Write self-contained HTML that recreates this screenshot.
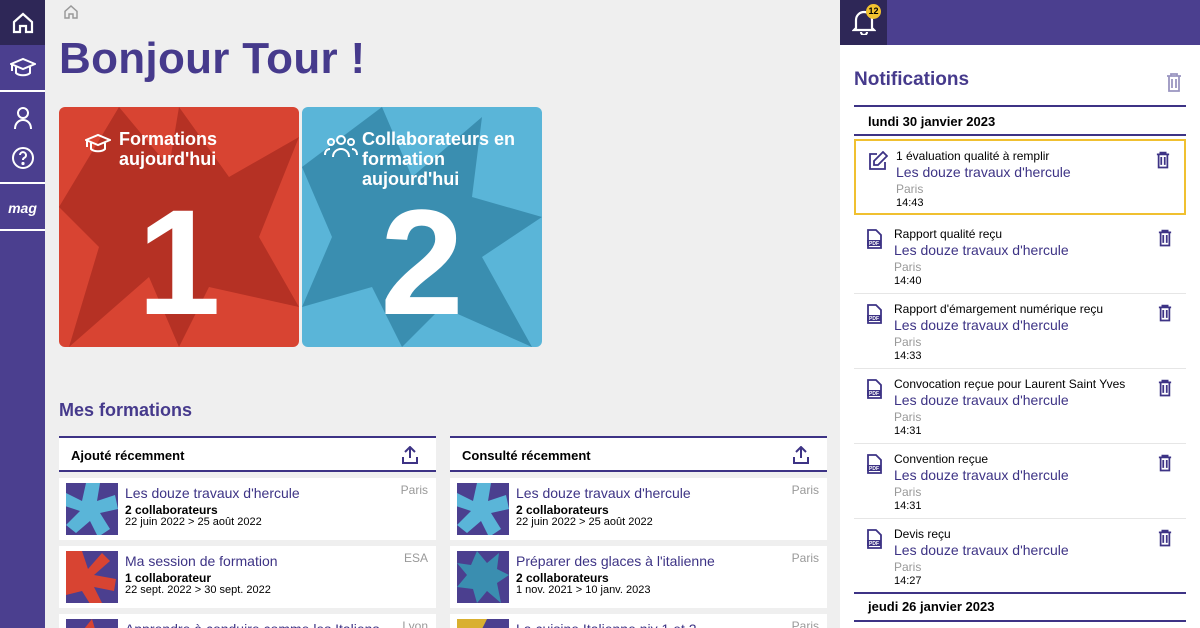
<!DOCTYPE html>
<html style="width:1200px;height:628px;overflow:hidden"><head><meta charset="utf-8"><style>
*{margin:0;padding:0;box-sizing:border-box}
body{width:1200px;height:628px;overflow:hidden;background:#efefef;font-family:"Liberation Sans",sans-serif;position:relative}
.abs{position:absolute}
.side{left:0;top:0;width:45px;height:628px;background:#4b3f8f}
.sb{position:absolute;left:0;width:45px;display:flex;align-items:center;justify-content:center;border-bottom:2px solid #fff}
.card{position:absolute;top:107px;width:240px;height:240px;border-radius:6px;overflow:hidden}
.ct{position:absolute;color:#fff;font-size:18px;font-weight:bold;line-height:20px}
.big{position:absolute;color:#fff;font-weight:bold;font-size:150px;line-height:150px;width:100%;text-align:center;top:80px}
.list{position:absolute;top:436px;width:377px;height:192px;overflow:hidden}
.lh{height:36px;border-top:2px solid #3d3385;border-bottom:2px solid #3d3385;background:#fff;font-size:13px;font-weight:bold;padding:10px 12px;position:relative}
.it{background:#fff;height:62px;margin-top:6px;position:relative}
.th{position:absolute;left:7px;top:5px;width:52px;height:52px;background:#4b3f8f;overflow:hidden}
.t1{position:absolute;left:66px;top:7px;color:#3d3385;font-size:14px}
.t2{position:absolute;left:66px;top:25px;font-size:12px;font-weight:bold}
.t3{position:absolute;left:66px;top:38px;font-size:11px}
.pl{position:absolute;right:8px;top:5px;color:#999;font-size:12px}
.panel{left:840px;top:45px;width:360px;height:583px;background:#fff}
.n{position:absolute;left:854px;width:332px;height:75px;border-bottom:1px solid #e6e6e6}
.n .a{position:absolute;left:40px;top:8px;font-size:12px}
.n .b{position:absolute;left:40px;top:23px;font-size:14px;color:#3d3385}
.n .c{position:absolute;left:40px;top:41px;font-size:12px;color:#999}
.n .d{position:absolute;left:40px;top:56px;font-size:11px}
.n svg.i{position:absolute;left:12px;top:10px}
.n svg.t{position:absolute;right:14px;top:10px}
</style></head><body>
<div class="abs side"></div>
<div class="sb" style="top:0;height:45px;background:#2e2757;border:none">
<svg width="24" height="24" viewBox="0 0 24 24" fill="none" stroke="#fff" stroke-width="2.2"><path d="M3 11L12 3l9 8v10h-6v-6h-6v6H3z"/></svg></div>
<div class="sb" style="top:45px;height:47px">
<svg width="26" height="22" viewBox="0 0 26 22" fill="none" stroke="#fff" stroke-width="2"><path d="M1 7l12-5 12 5-12 5z"/><path d="M6 10v6c3 3 11 3 14 0v-6"/><path d="M2 8v6"/></svg></div>
<div class="sb" style="top:94px;height:90px;flex-direction:column;gap:16px">
<svg width="20" height="24" viewBox="0 0 20 24" fill="none" stroke="#fff" stroke-width="2"><circle cx="10" cy="7" r="5"/><path d="M2 23c0-6 4-9 8-9s8 3 8 9"/></svg>
<svg width="24" height="24" viewBox="0 0 24 24" fill="none" stroke="#fff" stroke-width="2"><circle cx="12" cy="12" r="10"/><path d="M9 9a3 3 0 1 1 4 3c-1 .5-1 1-1 2"/><circle cx="12" cy="17.5" r=".6" fill="#fff"/></svg></div>
<div class="sb" style="top:186px;height:45px;color:#fff;font-weight:bold;font-style:italic;font-size:14px">mag</div>

<svg class="abs" style="left:63px;top:4px" width="16" height="16" viewBox="0 0 24 24" fill="none" stroke="#999" stroke-width="2.2"><path d="M3 11L12 3l9 8v10h-6v-6h-6v6H3z"/></svg>
<div class="abs" style="left:59px;top:34px;color:#463a8c;font-size:44px;font-weight:bold;letter-spacing:0.3px">Bonjour Tour !</div>

<div class="card" style="left:59px;background:#d84432">
<svg width="240" height="240" class="abs"><polygon points="0,100 60,0 110,60 120,0 170,70 240,30 200,130 240,200 150,180 120,240 90,170 10,240 40,140" fill="#b53124"/></svg>
<svg class="abs" style="left:26px;top:26px" width="26" height="22" viewBox="0 0 26 22" fill="none" stroke="#fff" stroke-width="2"><path d="M1 7l12-5 12 5-12 5z"/><path d="M6 10v6c3 3 11 3 14 0v-6"/><path d="M2 8v6"/></svg>
<div class="ct" style="left:60px;top:22px">Formations<br>aujourd'hui</div>
<div class="big">1</div></div>
<div class="card" style="left:302px;background:#5ab5d8">
<svg width="240" height="240" class="abs"><polygon points="0,60 40,30 80,0 110,70 180,10 170,90 240,110 180,150 230,240 140,200 100,240 70,180 0,200 30,130" fill="#3a8eb0"/></svg>
<svg class="abs" style="left:22px;top:26px" width="34" height="26" viewBox="0 0 34 26" fill="none" stroke="#fff" stroke-width="2"><circle cx="17" cy="7" r="4"/><circle cx="7" cy="9" r="3"/><circle cx="27" cy="9" r="3"/><path d="M9 24c0-5 4-8 8-8s8 3 8 8M1 22c0-4 2-6 5-6M33 22c0-4-2-6-5-6"/></svg>
<div class="ct" style="left:60px;top:22px">Collaborateurs en<br>formation<br>aujourd'hui</div>
<div class="big">2</div></div>

<div class="abs" style="left:59px;top:400px;color:#463a8c;font-size:18px;font-weight:bold">Mes formations</div>

<div class="list" style="left:59px">
<div class="lh">Ajouté récemment<svg style="position:absolute;right:18px;top:8px" width="16" height="18" viewBox="0 0 16 18" fill="none" stroke="#3d3385" stroke-width="2"><path d="M8 12V2M3 6l5-5 5 5M1 11v6h14v-6"/></svg></div>
<div class="it"><div class="th"><svg width="52" height="52"><path d="M20 0h14l-3 18 18-6 3 14-18 4 10 16-12 8-8-16-14 12-10-8 14-14-18-6 4-12 16 8z" fill="#5ab5d8"/></svg></div><div class="t1">Les douze travaux d'hercule</div><div class="t2">2 collaborateurs</div><div class="t3">22 juin 2022 &gt; 25 août 2022</div><div class="pl">Paris</div></div>
<div class="it"><div class="th"><svg width="52" height="52"><path d="M0 0h16l6 18 14-16 8 8-16 14 22 4-2 12-20-4 8 16-10 4-10-16L0 44z" fill="#d84432"/></svg></div><div class="t1">Ma session de formation</div><div class="t2">1 collaborateur</div><div class="t3">22 sept. 2022 &gt; 30 sept. 2022</div><div class="pl">ESA</div></div>
<div class="it"><div class="th"><svg width="52" height="52"><path d="M26 0l6 20H10z" fill="#d84432"/></svg></div><div class="t1">Apprendre à conduire comme les Italiens</div><div class="pl">Lyon</div></div>
</div>
<div class="list" style="left:450px">
<div class="lh">Consulté récemment<svg style="position:absolute;right:18px;top:8px" width="16" height="18" viewBox="0 0 16 18" fill="none" stroke="#3d3385" stroke-width="2"><path d="M8 12V2M3 6l5-5 5 5M1 11v6h14v-6"/></svg></div>
<div class="it"><div class="th"><svg width="52" height="52"><path d="M20 0h14l-3 18 18-6 3 14-18 4 10 16-12 8-8-16-14 12-10-8 14-14-18-6 4-12 16 8z" fill="#5ab5d8"/></svg></div><div class="t1">Les douze travaux d'hercule</div><div class="t2">2 collaborateurs</div><div class="t3">22 juin 2022 &gt; 25 août 2022</div><div class="pl">Paris</div></div>
<div class="it"><div class="th"><svg width="52" height="52"><polygon points="20,0 30,12 42,2 40,18 52,24 40,32 44,52 30,40 20,52 16,38 0,36 10,24 0,12 14,14" fill="#3a8eb0"/></svg></div><div class="t1">Préparer des glaces à l'italienne</div><div class="t2">2 collaborateurs</div><div class="t3">1 nov. 2021 &gt; 10 janv. 2023</div><div class="pl">Paris</div></div>
<div class="it"><div class="th"><svg width="52" height="52"><polygon points="0,0 30,0 20,20 0,20" fill="#d9b030"/></svg></div><div class="t1">La cuisine Italienne niv 1 et 2</div><div class="pl">Paris</div></div>
</div>

<div class="abs" style="left:840px;top:0;width:360px;height:45px;background:#4b3f8f"></div>
<div class="abs" style="left:840px;top:0;width:47px;height:45px;background:#2e2757"></div>
<svg class="abs" style="left:852px;top:9px" width="24" height="26" viewBox="0 0 24 26" fill="none" stroke="#fff" stroke-width="2.2"><path d="M4 19V11a8 8 0 0 1 16 0v8l2 2H2z"/><path d="M9 23a3 3 0 0 0 6 0"/></svg>
<div class="abs" style="left:866px;top:4px;width:15px;height:15px;border-radius:50%;background:#f2c230;font-size:9px;font-weight:bold;text-align:center;line-height:15px">12</div>
<div class="abs panel"></div>
<div class="abs" style="left:854px;top:69px;color:#463a8c;font-size:19px;font-weight:bold">Notifications</div>
<svg class="abs" style="left:1166px;top:73px" width="16" height="19" viewBox="0 0 16 19" fill="none" stroke="#9a95c0" stroke-width="1.8"><path d="M1 3h14M5 3V1h6v2M3 3v15h10V3M6 6v9M10 6v9"/></svg>
<div class="abs" style="left:854px;top:105px;width:332px;height:2px;background:#3d3385"></div>
<div class="abs" style="left:868px;top:114px;font-size:13px;font-weight:bold">lundi 30 janvier 2023</div>
<div class="abs" style="left:854px;top:134px;width:332px;height:2px;background:#3d3385"></div>

<div class="n" style="top:139px;height:76px;border:2px solid #f0c030"><svg class="i" width="20" height="20" viewBox="0 0 20 20" fill="none" stroke="#3d3385" stroke-width="1.8"><path d="M9 3H2v15h15v-7"/><path d="M15 1l4 4-9 9H6v-4z"/></svg><div class="a">1 évaluation qualité à remplir</div><div class="b">Les douze travaux d'hercule</div><div class="c">Paris</div><div class="d">14:43</div><svg class="t" width="14" height="18" viewBox="0 0 16 19" fill="none" stroke="#3d3385" stroke-width="2"><path d="M1 3h14M5 3V1h6v2M3 3v15h10V3M6 6v9M10 6v9"/></svg></div>

<div class="n" style="top:219px"><svg class="i" width="16" height="20" viewBox="0 0 16 20"><path d="M2 1h8l5 5v13H2z" fill="none" stroke="#3d3385" stroke-width="1.8"/><rect x="1" y="11" width="14" height="6" fill="#3d3385"/><text x="8" y="16" font-size="5" fill="#fff" text-anchor="middle" font-family="Liberation Sans" font-weight="bold">PDF</text></svg><div class="a">Rapport qualité reçu</div><div class="b">Les douze travaux d'hercule</div><div class="c">Paris</div><div class="d">14:40</div><svg class="t" width="14" height="18" viewBox="0 0 16 19" fill="none" stroke="#3d3385" stroke-width="2"><path d="M1 3h14M5 3V1h6v2M3 3v15h10V3M6 6v9M10 6v9"/></svg></div>
<div class="n" style="top:294px"><svg class="i" width="16" height="20" viewBox="0 0 16 20"><path d="M2 1h8l5 5v13H2z" fill="none" stroke="#3d3385" stroke-width="1.8"/><rect x="1" y="11" width="14" height="6" fill="#3d3385"/><text x="8" y="16" font-size="5" fill="#fff" text-anchor="middle" font-family="Liberation Sans" font-weight="bold">PDF</text></svg><div class="a">Rapport d'émargement numérique reçu</div><div class="b">Les douze travaux d'hercule</div><div class="c">Paris</div><div class="d">14:33</div><svg class="t" width="14" height="18" viewBox="0 0 16 19" fill="none" stroke="#3d3385" stroke-width="2"><path d="M1 3h14M5 3V1h6v2M3 3v15h10V3M6 6v9M10 6v9"/></svg></div>
<div class="n" style="top:369px"><svg class="i" width="16" height="20" viewBox="0 0 16 20"><path d="M2 1h8l5 5v13H2z" fill="none" stroke="#3d3385" stroke-width="1.8"/><rect x="1" y="11" width="14" height="6" fill="#3d3385"/><text x="8" y="16" font-size="5" fill="#fff" text-anchor="middle" font-family="Liberation Sans" font-weight="bold">PDF</text></svg><div class="a">Convocation reçue pour Laurent Saint Yves</div><div class="b">Les douze travaux d'hercule</div><div class="c">Paris</div><div class="d">14:31</div><svg class="t" width="14" height="18" viewBox="0 0 16 19" fill="none" stroke="#3d3385" stroke-width="2"><path d="M1 3h14M5 3V1h6v2M3 3v15h10V3M6 6v9M10 6v9"/></svg></div>
<div class="n" style="top:444px"><svg class="i" width="16" height="20" viewBox="0 0 16 20"><path d="M2 1h8l5 5v13H2z" fill="none" stroke="#3d3385" stroke-width="1.8"/><rect x="1" y="11" width="14" height="6" fill="#3d3385"/><text x="8" y="16" font-size="5" fill="#fff" text-anchor="middle" font-family="Liberation Sans" font-weight="bold">PDF</text></svg><div class="a">Convention reçue</div><div class="b">Les douze travaux d'hercule</div><div class="c">Paris</div><div class="d">14:31</div><svg class="t" width="14" height="18" viewBox="0 0 16 19" fill="none" stroke="#3d3385" stroke-width="2"><path d="M1 3h14M5 3V1h6v2M3 3v15h10V3M6 6v9M10 6v9"/></svg></div>
<div class="n" style="top:519px;border-bottom:none"><svg class="i" width="16" height="20" viewBox="0 0 16 20"><path d="M2 1h8l5 5v13H2z" fill="none" stroke="#3d3385" stroke-width="1.8"/><rect x="1" y="11" width="14" height="6" fill="#3d3385"/><text x="8" y="16" font-size="5" fill="#fff" text-anchor="middle" font-family="Liberation Sans" font-weight="bold">PDF</text></svg><div class="a">Devis reçu</div><div class="b">Les douze travaux d'hercule</div><div class="c">Paris</div><div class="d">14:27</div><svg class="t" width="14" height="18" viewBox="0 0 16 19" fill="none" stroke="#3d3385" stroke-width="2"><path d="M1 3h14M5 3V1h6v2M3 3v15h10V3M6 6v9M10 6v9"/></svg></div>
<div class="abs" style="left:854px;top:592px;width:332px;height:2px;background:#3d3385"></div>
<div class="abs" style="left:868px;top:599px;font-size:13px;font-weight:bold">jeudi 26 janvier 2023</div>
<div class="abs" style="left:854px;top:620px;width:332px;height:2px;background:#3d3385"></div>
</body></html>
